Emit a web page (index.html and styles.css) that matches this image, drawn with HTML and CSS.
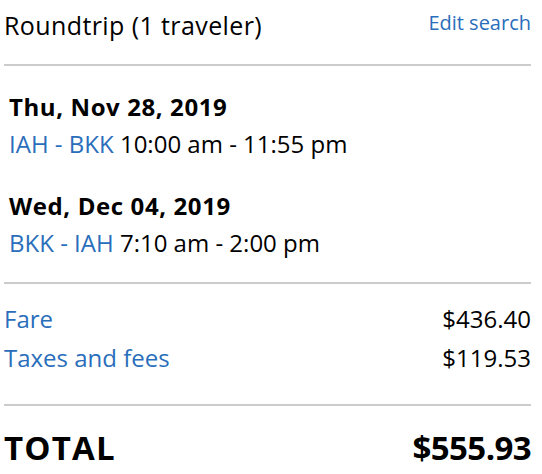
FILE: index.html
```html
<!DOCTYPE html>
<html>
<head>
<meta charset="utf-8">
<link rel="stylesheet" href="styles.css">
</head>
<body>
<div class="summary">
  <div class="header">
    <div class="title">Roundtrip (1 traveler)</div>
    <a class="edit" href="#">Edit search</a>
  </div>
  <hr class="divider">
  <div class="legs">
    <div class="leg">
      <div class="date">Thu, Nov 28, 2019</div>
      <div class="route"><span class="airports">IAH - BKK</span> 10:00 am - 11:55 pm</div>
    </div>
    <div class="leg">
      <div class="date">Wed, Dec 04, 2019</div>
      <div class="route"><span class="airports">BKK - IAH</span> 7:10 am - 2:00 pm</div>
    </div>
  </div>
  <hr class="divider">
  <div class="prices">
    <div class="row"><span class="label">Fare</span><span class="amount">$436.40</span></div>
    <div class="row"><span class="label">Taxes and fees</span><span class="amount">$119.53</span></div>
  </div>
  <hr class="divider">
  <div class="total"><span class="total-label">TOTAL</span><span class="total-amount">$555.93</span></div>
</div>
</body>
</html>
```
FILE: styles.css
```css
html, body {
  margin: 0;
  padding: 0;
  background: #fff;
}
body {
  font-family: "Open Sans", sans-serif;
  color: #000;
}
.summary {
  padding: 0 11px 0 4px;
}
.header {
  display: flex;
  justify-content: space-between;
  align-items: flex-start;
  padding-top: 9px;
  height: 64px;
  box-sizing: border-box;
}
.title {
  font-size: 25px;
  line-height: 32px;
  letter-spacing: 0.4px;
}
.edit {
  font-size: 20px;
  line-height: 28px;
  color: #2a6ebb;
  text-decoration: none;
}
.divider {
  border: 0;
  height: 2px;
  background: #cccccc;
  margin: 0;
}
.legs {
  padding: 23px 0 21px 5px;
  display: flex;
  flex-direction: column;
  gap: 26px;
}
.date {
  font-weight: bold;
  font-size: 24px;
  line-height: 36px;
  letter-spacing: 0.6px;
}
.route {
  font-size: 24px;
  line-height: 37px;
}
.airports {
  color: #2a6ebb;
}
.prices {
  padding: 15px 0 27px;
}
.row {
  display: flex;
  justify-content: space-between;
  font-size: 24px;
  line-height: 39px;
}
.label {
  color: #2a6ebb;
}
.total {
  display: flex;
  justify-content: space-between;
  font-weight: bold;
  font-size: 33px;
  line-height: 44px;
  padding-top: 20px;
}
.total-label {
  letter-spacing: 1.2px;
}
.total-amount {
  letter-spacing: -0.6px;
}
```
